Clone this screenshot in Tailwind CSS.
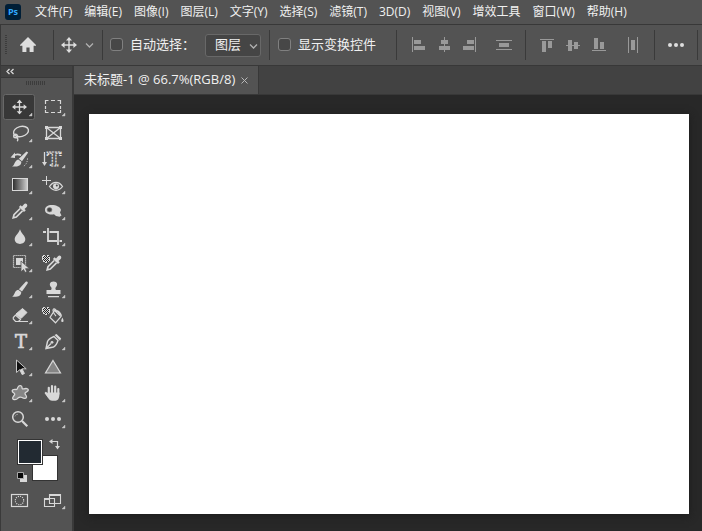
<!DOCTYPE html>
<html lang="zh-CN">
<head>
<meta charset="utf-8">
<title>Ps</title>
<script src="https://cdn.jsdelivr.net/npm/@tailwindcss/browser@4"></script>
</head>
<body class="flex h-screen flex-col overflow-hidden bg-[#535353] font-['Open_Sans','Noto_Sans_CJK_SC',sans-serif] text-xs text-[#f0f0f0]">
<svg class="hidden" aria-hidden="true">
  <defs>
    <symbol id="move" viewBox="0 0 16 16">
      <path d="M8 2v12M2 8h12" stroke="currentColor" stroke-width="1.4" fill="none"/>
      <path d="M8 0l3 3.6H5zM8 16l3-3.6H5zM0 8l3.6-3v6zM16 8l-3.6-3v6z" fill="currentColor"/>
    </symbol>
    <symbol id="corner" viewBox="0 0 33 26"><path d="M29 19v3h-3z" fill="#c8c8c8" stroke="#c8c8c8" stroke-width=".4"/></symbol>
    <symbol id="dropper" viewBox="0 0 16 16">
      <path d="M10 3.600l2-2.300c1.700-1.900 4.500.6 2.700 2.600l-2.200 2.100 1.300 1.300-1.800 1.700L6.900 4l1.700-1.700z" fill="currentColor"/>
      <path d="M8.200 5.500L2 11.700 1.200 14.800 4.300 14 10.500 7.800" fill="none" stroke="currentColor" stroke-width="1.700"/>
    </symbol>
    <symbol id="checker" viewBox="0 0 8 8">
      <path d="M1 0h2v1h2v-1h2v2h1v4h-1v1h-2v1h-2v-1h-2v-2h-1v-4h1z" fill="#d8d8d8"/>
      <path d="M2 1h1v1h-1zM4 1h1v1h-1zM6 1h1v1h-1zM1 2h1v1h-1zM3 2h1v1h-1zM5 2h1v1h-1zM2 3h1v1h-1zM4 3h1v1h-1zM6 3h1v1h-1zM1 4h1v1h-1zM3 4h1v1h-1zM5 4h1v1h-1zM2 5h1v1h-1zM4 5h1v1h-1zM6 5h1v1h-1zM3 6h1v1h-1zM5 6h1v1h-1z" fill="#222"/>
    </symbol>
  </defs>
</svg>

<nav class="flex h-6 shrink-0 items-center whitespace-nowrap pl-[5px]" aria-label="菜单">
  <span class="mr-[14px] flex size-4 items-center justify-center rounded-[3px] bg-[#001e36] font-['Open_Sans',sans-serif] text-[9px] font-bold leading-4 text-[#31a8ff]">Ps</span>
  <div class="flex items-center gap-3 leading-6">
    <button>文件(F)</button><button>编辑(E)</button><button>图像(I)</button><button>图层(L)</button><button>文字(Y)</button><button>选择(S)</button><button>滤镜(T)</button><button>3D(D)</button><button>视图(V)</button><button>增效工具</button><button>窗口(W)</button><button>帮助(H)</button>
  </div>
</nav>

<div class="flex h-[42px] shrink-0 items-center whitespace-nowrap border-y border-l border-[#383838] pl-1 text-[13px]">
  <div class="h-5 w-[2px] bg-[repeating-linear-gradient(#3c3c3c_0_1px,transparent_1px_2px)]"></div>
  <button class="ml-[11px] text-[#dedede]" aria-label="主页"><svg class="h-5 w-5" viewBox="0 0 20 20" fill="currentColor"><path d="M10 2l8 8v.8h-2.400V17h-4v-4.600H8.400V17h-4v-6.200H2V10z"/></svg></button>
  <div class="ml-[15px] h-[30px] w-px bg-[#3a3a3a]"></div>
  <button class="ml-[7px] flex items-center gap-2 text-[#dedede]" aria-label="移动工具">
    <svg class="size-4"><use href="#move"/></svg>
    <svg class="h-4 w-[9px]" viewBox="0 0 9 16" fill="none" stroke="#b0b0b0" stroke-width="1.300"><path d="M1 6.500l3.500 3.500L8 6.500"/></svg>
  </button>
  <div class="ml-2 h-[30px] w-px bg-[#3a3a3a]"></div>
  <label class="ml-[7px] flex items-center gap-[7px]">
    <input type="checkbox" class="size-[13px] appearance-none rounded-[3px] border border-[#808080] bg-[#474747]">自动选择：
  </label>
  <div class="relative ml-[10px]">
    <select aria-label="自动选择" class="block h-[23px] w-14 appearance-none rounded-[3px] border border-[#686868] bg-[#454545] pb-[2px] pl-[9px] text-[13px] leading-[19px]"><option>图层</option></select>
    <svg class="pointer-events-none absolute right-[3px] top-1 h-4 w-[9px]" viewBox="0 0 9 16" fill="none" stroke="#b0b0b0" stroke-width="1.300"><path d="M1 6.500l3.500 3.500L8 6.500"/></svg>
  </div>
  <div class="ml-2 h-[30px] w-px bg-[#3a3a3a]"></div>
  <label class="ml-2 flex items-center gap-[7px]">
    <input type="checkbox" class="size-[13px] appearance-none rounded-[3px] border border-[#808080] bg-[#474747]">显示变换控件
  </label>
  <div class="ml-5 flex items-center gap-2 text-[#999]">
    <div class="h-[30px] w-px bg-[#3a3a3a]"></div>
    <div class="flex">
      <button aria-label="左对齐"><svg class="h-5 w-[26px]" fill="currentColor"><path d="M7 2h1v15h-1zM9 5h7v4h-7zM9 11h11v4h-11z"/></svg></button>
      <button aria-label="水平居中对齐"><svg class="h-5 w-[26px]" fill="currentColor"><path d="M13 2h1v15h-1zM10 5h7v4h-7zM8 11h11v4h-11z"/></svg></button>
      <button aria-label="右对齐"><svg class="h-5 w-[26px]" fill="currentColor"><path d="M18 2h1v15h-1zM10 5h7v4h-7zM6 11h11v4h-11z"/></svg></button>
    </div>
    <button aria-label="垂直分布"><svg class="h-5 w-[26px]" fill="currentColor"><path d="M5 5h16v1h-16zM5 14h16v1h-16zM8 8h10v4h-10z"/></svg></button>
    <div class="h-[30px] w-px bg-[#3a3a3a]"></div>
    <div class="flex">
      <button aria-label="顶对齐"><svg class="h-5 w-[26px]" fill="currentColor"><path d="M6 4h14v1h-14zM8 6h4v11h-4zM14 6h4v7h-4z"/></svg></button>
      <button aria-label="垂直居中对齐"><svg class="h-5 w-[26px]" fill="currentColor"><path d="M6 10h14v1h-14zM8 5h4v11h-4zM14 7h4v7h-4z"/></svg></button>
      <button aria-label="底对齐"><svg class="h-5 w-[26px]" fill="currentColor"><path d="M6 15h14v1h-14zM8 3h4v11h-4zM14 7h4v7h-4z"/></svg></button>
    </div>
    <button aria-label="水平分布"><svg class="h-5 w-[26px]" fill="currentColor"><path d="M8 2h1v16h-1zM17 2h1v16h-1zM11 5h4v10h-4z"/></svg></button>
    <div class="h-[30px] w-px bg-[#3a3a3a]"></div>
    <button aria-label="更多" class="text-[#dedede]"><svg class="h-5 w-[26px]" fill="currentColor"><circle cx="7" cy="10" r="2"/><circle cx="13" cy="10" r="2"/><circle cx="19" cy="10" r="2"/></svg></button>
    <div class="h-[30px] w-px bg-[#3a3a3a]"></div>
  </div>
</div>

<div class="flex min-h-0 flex-1">
  <aside class="flex w-[74px] shrink-0 flex-col border-l border-r-2 border-[#3a3a3a] bg-[#535353]">
    <button class="flex h-3 shrink-0 items-center border-b border-[#383838] bg-[#424242] pl-[5px]" aria-label="折叠"><svg class="h-[7px] w-2" viewBox="0 0 8 7" fill="none" stroke="#d8d8d8" stroke-width="1.300"><path d="M3.500 1L1 3.500 3.500 6M7.500 1L5 3.500 7.500 6"/></svg></button>
    <div class="ml-[25px] mt-[3px] h-1 w-5 shrink-0 bg-[repeating-linear-gradient(90deg,#3c3c3c_0_1px,transparent_1px_2px)]"></div>
    <div class="ml-[2px] mt-[9px] grid w-[66px] shrink-0 grid-cols-2 text-[#d8d8d8] [&_button]:block [&_button]:h-[26px] [&_svg]:block [&_button>svg]:h-[26px] [&_button>svg]:w-[33px]">
      <button aria-label="移动"><svg viewBox="0 0 33 26"><rect x=".5" y=".5" width="31" height="25" rx="2" fill="#383838" stroke="#686868"/><use href="#move" x="9" y="5.500" width="15" height="15"/><use href="#corner"/></svg></button>
      <button aria-label="矩形选框"><svg viewBox="0 0 33 26"><path d="M9.500 10V6.500h3M15 6.500h4M21.500 6.500h3V10M24.500 12v3M24.500 16v2.500h-3M19 18.500h-4M12.500 18.500h-3V16M9.500 15v-3" fill="none" stroke="currentColor" stroke-width="1.200"/><use href="#corner"/></svg></button>

      <button aria-label="套索"><svg viewBox="0 0 33 26"><g fill="none" stroke="currentColor" stroke-width="1.400"><ellipse cx="18" cy="11.500" rx="7.600" ry="5" transform="rotate(-14 18 11.500)"/><circle cx="12.500" cy="16" r="1.800"/><path d="M13.500 17.500c2 1 1.500 3 .5 3.500"/></g><use href="#corner"/></svg></button>
      <button aria-label="图框"><svg viewBox="0 0 33 26"><path d="M10.500 7.500h14v11h-14zM10.500 7.500l14 11M24.500 7.500l-14 11" fill="none" stroke="currentColor" stroke-width="1.300"/><path d="M9 6h3v3h-3zM23 6h3v3h-3zM9 17h3v3h-3zM23 17h3v3h-3z" fill="currentColor"/></svg></button>

      <button aria-label="历史记录画笔"><svg viewBox="0 0 33 26"><path d="M23.500 5.500l1.700 1-6.200 8.700-3.200-2.500zM15.300 13.400l3 2.300c.2 4.200-4 5.200-9.300 4.800 2.800-1 2.200-6 6.300-7.100z" fill="currentColor"/><path d="M10.500 9.800c2.500-2 5-1.800 7.500-.6" fill="none" stroke="currentColor" stroke-width="1.700"/><path d="M12 6.500v5.500L7.500 11.500z" fill="currentColor"/><path d="M24.500 12.500c0 4-2 7-4.500 8" fill="none" stroke="currentColor" stroke-dasharray="1 1.500"/><use href="#corner"/></svg></button>
      <button aria-label="文字蒙版"><svg viewBox="0 0 33 26"><path d="M8.500 6v11" stroke="currentColor" stroke-width="1.300"/><path d="M6 16h5l-2.500 4z" fill="currentColor"/><text x="18" y="19.500" text-anchor="middle" class="font-['DejaVu_Serif',serif] text-[19px] font-bold" fill="#535353" stroke="#e4e4e4" stroke-width="1.200" stroke-dasharray="2 1">T</text><use href="#corner"/></svg></button>

      <button aria-label="渐变"><svg viewBox="0 0 33 26"><linearGradient id="ramp"><stop offset="0" stop-color="#2a2a2a"/><stop offset="1" stop-color="#d0d0d0"/></linearGradient><rect x="9.500" y="6.500" width="15" height="12" fill="url(#ramp)" stroke="currentColor"/><use href="#corner"/></svg></button>
      <button aria-label="红眼"><svg viewBox="0 0 33 26"><path d="M10.500 4v9M6 8.500h9" stroke="currentColor"/><path d="M13.500 14.500c3.500-5.500 9.500-5.500 13 0-3.500 5-9.500 5-13 0z" fill="none" stroke="currentColor" stroke-width="1.300"/><circle cx="20" cy="14.300" r="3" fill="currentColor"/><circle cx="20.800" cy="13.500" r="1" fill="#444"/><use href="#corner"/></svg></button>

      <button aria-label="吸管"><svg viewBox="0 0 33 26"><use href="#dropper" x="9" y="5" width="16" height="16"/><use href="#corner"/></svg></button>
      <button aria-label="海绵"><svg viewBox="0 0 33 26"><path d="M9 12c0-3.500 3-5 6.500-5 5 0 9 2 9.500 5l-1 2.500 1.500 3-2 1.200-3.500-.7-2-1.700c-4.500.8-9-.8-9-4.300z" fill="currentColor"/><ellipse cx="13.500" cy="11.800" rx="2.500" ry="2.200" fill="#444" stroke="#888" stroke-width=".6"/><use href="#corner"/></svg></button>

      <button aria-label="模糊"><svg viewBox="0 0 33 26"><path d="M17 5.300c1 3.700 5.300 6.700 5.300 10 0 6.200-10.600 6.200-10.600 0C11.700 12 16 9 17 5.300z" fill="currentColor"/><use href="#corner"/></svg></button>
      <button aria-label="裁剪"><svg viewBox="0 0 33 26"><path d="M12 4v13h9M23.500 17H26M22 21V8h-8.500M10 8H7" fill="none" stroke="currentColor" stroke-width="1.800"/><use href="#corner"/></svg></button>

      <button aria-label="对象选择"><svg viewBox="0 0 33 26"><rect x="10.500" y="5.500" width="12" height="12" fill="none" stroke="currentColor" stroke-width="1.200" stroke-dasharray="1.200 .8"/><path d="M13 8h7v7h-7z" fill="currentColor"/><path d="M18 11v11l2.500-2.500 1.500 3 2-1-1.500-2.800h4z" fill="currentColor" stroke="#535353" stroke-width=".8"/><use href="#corner"/></svg></button>
      <button aria-label="颜色取样"><svg viewBox="0 0 33 26"><use href="#checker" x="6" y="5" width="8" height="8"/><use href="#dropper" x="10" y="5" width="16" height="16"/></svg></button>

      <button aria-label="画笔"><svg viewBox="0 0 33 26"><path d="M22.700 5.800c1.500-.8 2.600.3 1.900 1.700l-5.600 8.100-3.100-2.400zM15.200 13.800l3 2.300c.2 4.100-3.700 5.100-9 4.600 2.500-1 2-5.900 6-6.900z" fill="currentColor"/><use href="#corner"/></svg></button>
      <button aria-label="仿制图章"><svg viewBox="0 0 33 26"><path d="M17.500 5.500c4 0 4.500 3.500 2.500 5.500-.8 1-.8 2 0 3h4.500v4h-14v-4H15c.8-1 .8-2 0-3-2-2-1.500-5.500 2.500-5.500zM12 20h11v1.300H12z" fill="currentColor"/><use href="#corner"/></svg></button>

      <button aria-label="橡皮擦"><svg viewBox="0 0 33 26"><path d="M19.500 6.500l4.500 4-6 6-5-4.500z" fill="currentColor" stroke="currentColor"/><path d="M12.500 13l5 4.500-2 2h-3L10.300 17v-1.500zM14 19.500h11" fill="none" stroke="currentColor" stroke-width="1.200"/><use href="#corner"/></svg></button>
      <button aria-label="油漆桶"><svg viewBox="0 0 33 26"><use href="#checker" x="6" y="5" width="8" height="8"/><path d="M18.500 8.500l6.500 6-5.500 6.300-5.500-5.300zM20 14c-2-2-4-6-2.500-7s3 2 3.500 4" fill="none" stroke="currentColor" stroke-width="1.200"/><path d="M19.500 7.500c4 1 6.500 4 6.500 7l-3-2zM26.400 15.500c1.600 3 1.600 4.500 0 4.500s-1.600-1.500 0-4.500z" fill="currentColor"/></svg></button>

      <button aria-label="横排文字"><svg viewBox="0 0 33 26"><text x="18" y="20" text-anchor="middle" fill="currentColor" stroke="currentColor" stroke-width=".7" class="font-['DejaVu_Serif',serif] text-[18px]">T</text><use href="#corner"/></svg></button>
      <button aria-label="钢笔"><svg viewBox="0 0 33 26"><path d="M10 20.500l1.500-7c1-2.500 3.500-3.800 6.500-5l4 4c-1 3-2 5.500-4.500 6.500zM10 20.500l5-5" fill="none" stroke="currentColor" stroke-width="1.400"/><circle cx="16" cy="14.300" r="1.400" fill="currentColor"/><path d="M18.500 7l2-1 4.700 4.500-1.200 2.300z" fill="currentColor"/><use href="#corner"/></svg></button>

      <button aria-label="路径选择"><svg viewBox="0 0 33 26"><path d="M13.500 6v12.500l3.200-2.800 2.500 5 2.300-1.200-2.500-4.700h4.200z" fill="#101010" stroke="#c8c8c8"/><path d="M16.700 15.700l2.500 5 2.300-1.200-2.500-4.700z" fill="currentColor"/><use href="#corner"/></svg></button>
      <button aria-label="三角形"><svg viewBox="0 0 33 26"><path d="M17 6.500l7.500 12.500h-15z" fill="#858585" stroke="currentColor" stroke-width="1.200"/></svg></button>

      <button aria-label="自定形状"><svg viewBox="0 0 33 26"><path d="M15 7c1-2 4-1.700 4 .5 0 1.500.6 1.600 2 1.300 2-.6 4.300-.3 4.300 1.200 0 1.800-3.300 1.800-3.300 3.500 0 1.500 2 2 1.500 3.700-.6 1.600-2.800 1.400-4.500.3-1.500-.8-2.500-.8-4 .6-1.700 1.800-4.800 2-5.300.4-.5-1.800 2-2.800 2-4.300 0-1.300-2.700-1.600-2.500-3.500.2-1.500 2.300-1.400 4-1.200 1.500 0 1-1 1.800-2.500z" fill="#858585" stroke="currentColor" stroke-width="1.300"/><use href="#corner"/></svg></button>
      <button aria-label="抓手"><svg viewBox="0 0 33 26"><path d="M12.800 15V7.800M16 13.500V6M19.200 13.500V6.500M22.300 14V9M13 17l-3.200-4" stroke="currentColor" stroke-width="2.200" stroke-linecap="round"/><path d="M11.700 12.500h11.700c.3 5-1 8.200-3.900 8.200h-3.500c-2.500 0-4-3-5.500-5.500z" fill="currentColor"/><use href="#corner"/></svg></button>

      <button aria-label="缩放"><svg viewBox="0 0 33 26"><circle cx="15" cy="11" r="5.300" fill="none" stroke="currentColor" stroke-width="1.500"/><path d="M19 15l5.300 5.300" stroke="currentColor" stroke-width="2.200"/><path d="M12 10.500c.5-1.500 1.500-2.200 3-2.200" fill="none" stroke="#999"/></svg></button>
      <button aria-label="更多工具"><svg viewBox="0 0 33 26" fill="currentColor"><circle cx="11" cy="13" r="2"/><circle cx="17" cy="13" r="2"/><circle cx="23" cy="13" r="2"/><use href="#corner"/></svg></button>

      <div class="relative col-span-2 h-[55px]">
        <input type="button" aria-label="背景色" class="absolute left-[29px] top-[23px] size-[26px] border border-[#333] bg-white">
        <input type="button" aria-label="前景色" class="absolute left-[14px] top-[7px] size-[26px] border border-[#333] bg-[#222a32] ring-1 ring-inset ring-white">
        <button aria-label="切换颜色" class="absolute left-[46px] top-[7px] !h-[11px]"><svg class="!h-[11px] !w-[11px]" viewBox="0 0 11 11"><path d="M3 2.500h5.500V8" fill="none" stroke="currentColor" stroke-width="1.200"/><path d="M0 2.500L3.500 0v5zM8.500 10.500L6 7h5z" fill="currentColor"/></svg></button>
        <button aria-label="默认颜色" class="absolute left-[14px] top-10 !h-[10px]"><svg class="!h-[10px] !w-[10px]" viewBox="0 0 10 10"><path d="M3 3h7v7h-7z" fill="#d8d8d8"/><path d="M.5.5h6v6h-6z" fill="#080808" stroke="#aaa"/></svg></button>
      </div>

      <button aria-label="快速蒙版"><svg viewBox="0 0 33 26"><rect x="8.500" y="7.500" width="16" height="12" fill="none" stroke="currentColor" stroke-width="1.200"/><circle cx="16.500" cy="13.500" r="4.200" fill="none" stroke="currentColor" stroke-width="1.100" stroke-dasharray="1.100 1.100"/></svg></button>
      <button aria-label="屏幕模式"><svg viewBox="0 0 33 26"><path d="M8.500 11.500h10v8h-10zM13.500 7.500h11v9h-11z" fill="#535353" stroke="currentColor" stroke-width="1.100"/><path d="M8 11h5v2h-5zM13 7h12v2h-12z" fill="currentColor"/><use href="#corner"/></svg></button>
    </div>
  </aside>

  <main class="flex min-w-0 flex-1 flex-col bg-[#282828]">
    <div class="flex h-[29px] shrink-0 border-b border-[#383838] bg-[#424242]">
      <div class="flex items-center gap-[6px] whitespace-nowrap border-r border-[#383838] bg-[#535353] px-[10px] text-[13px]">
        <span>未标题-1 @ 66.7%(RGB/8)</span>
        <button aria-label="关闭"><svg class="size-[7px]" viewBox="0 0 7 7" stroke="#b8b8b8"><path d="M.5.5l6 6M6.500.5l-6 6"/></svg></button>
      </div>
    </div>
    <div class="flex flex-1 pb-[17px] pl-[15px] pr-[13px] pt-[19px]">
      <div class="flex-1 bg-white shadow-[0_2px_8px_#1c1c1c]"></div>
    </div>
  </main>
</div>
</body>
</html>
